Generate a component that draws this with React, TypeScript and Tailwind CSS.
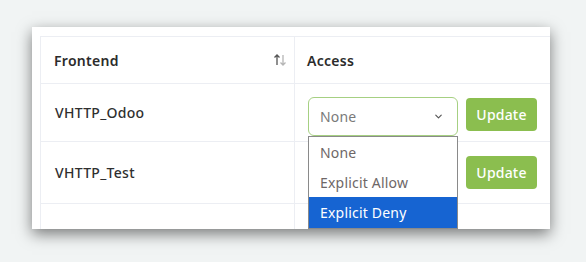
import { ChevronDown } from "lucide-react";

const font = { fontFamily: '"Noto Sans", "Open Sans", sans-serif' };

function SortIcon() {
  return (
    <svg width="14" height="14" viewBox="0 0 14 14" fill="none">
      <path d="M4 12V2M1.5 4.5L4 2l2.5 2.5" stroke="#555" strokeWidth="1.3" />
      <path d="M10 2v10M7.5 9.5L10 12l2.5-2.5" stroke="#b5b5b5" strokeWidth="1.3" />
    </svg>
  );
}

function UpdateButton() {
  return (
    <button className="flex h-[33px] w-[71px] items-center justify-center rounded-[4px] bg-[#8bbe4f] text-[14px] font-medium tracking-[0.2px] text-white">
      Update
    </button>
  );
}

export default function App() {
  return (
    <div className="h-[262px] w-[586px] bg-[#f1f4f4] pt-[27px] pl-[32px]" style={font}>
      <div className="relative h-[202px] w-[518px] overflow-hidden bg-white pt-[9px] pl-[8px] shadow-[0_5px_14px_rgba(0,0,0,0.5)]">
        <div className="w-[600px] border-t border-l border-[#eceef3]">
          {/* header */}
          <div className="flex h-[47px] border-b border-[#eceef3]">
            <div className="flex w-[254px] items-center justify-between border-r border-[#eceef3] pr-[7px] pl-[13px]">
              <span className="text-[14px] font-semibold tracking-[0.3px] text-[#2b2b2b]">Frontend</span>
              <SortIcon />
            </div>
            <div className="flex items-center pl-[12px]">
              <span className="text-[14px] font-semibold tracking-[0.3px] text-[#2b2b2b]">Access</span>
            </div>
          </div>
          {/* row 1 */}
          <div className="flex h-[58px] border-b border-[#eceef3]">
            <div className="flex w-[254px] items-center border-r border-[#eceef3] pl-[14px]">
              <span className="text-[14px] font-medium tracking-[0.3px] text-[#2f2f2f]">VHTTP_Odoo</span>
            </div>
            <div className="relative flex items-center gap-[8px] pl-[13px] pt-[12px] pb-[4px]">
              <div className="flex h-[39px] w-[150px] items-center justify-between rounded-[6px] border border-[#a6d082] pr-[13px] pl-[11px]">
                <span className="text-[14px] tracking-[0.2px] text-[#7a7a7a]">None</span>
                <ChevronDown size={11} strokeWidth={2.5} className="text-[#555]" />
              </div>
              <div className="-mt-[4px]">
                <UpdateButton />
              </div>
            </div>
          </div>
          {/* row 2 */}
          <div className="flex h-[62px] border-b border-[#eceef3]">
            <div className="flex w-[254px] items-center border-r border-[#eceef3] pl-[14px]">
              <span className="text-[14px] font-medium tracking-[0.3px] text-[#2f2f2f]">VHTTP_Test</span>
            </div>
            <div className="flex items-center pl-[171px]">
              <UpdateButton />
            </div>
          </div>
          <div className="flex h-[40px]">
            <div className="w-[254px] border-r border-[#eceef3]" />
          </div>
        </div>

        {/* open dropdown list */}
        <div className="absolute top-[109px] left-[276px] w-[150px] border border-[#8a8a8a] bg-white text-[14px] tracking-[0.2px]">
          <div className="flex h-[30px] items-center pl-[11px] text-[#6e6767]">None</div>
          <div className="flex h-[30px] items-center pl-[11px] text-[#6e6767]">Explicit Allow</div>
          <div className="flex h-[31px] items-center bg-[#1664d2] pl-[11px] text-white">Explicit Deny</div>
        </div>
      </div>
    </div>
  );
}
